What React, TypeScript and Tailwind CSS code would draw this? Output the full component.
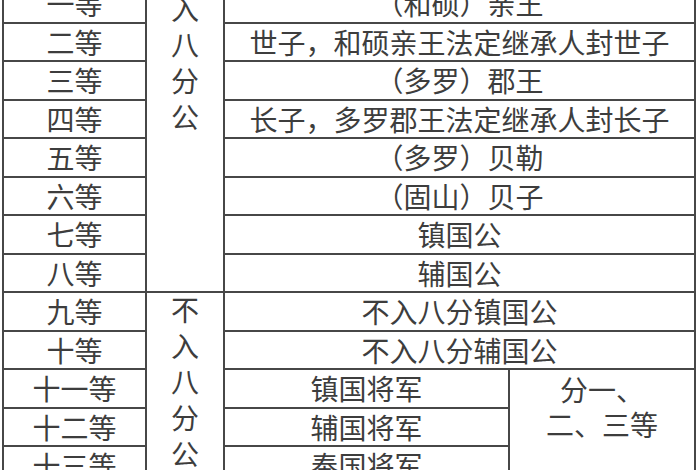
const font = { fontFamily: '"Noto Sans CJK SC", "Noto Sans CJK TC", sans-serif' }

const topRows = [
  { rank: '一等', title: '（和硕）亲王' },
  { rank: '二等', title: '世子，和硕亲王法定继承人封世子' },
  { rank: '三等', title: '（多罗）郡王' },
  { rank: '四等', title: '长子，多罗郡王法定继承人封长子' },
  { rank: '五等', title: '（多罗）贝勒' },
  { rank: '六等', title: '（固山）贝子' },
  { rank: '七等', title: '镇国公' },
  { rank: '八等', title: '辅国公' },
]

const midRows = [
  { rank: '九等', title: '不入八分镇国公' },
  { rank: '十等', title: '不入八分辅国公' },
]

const lowRows = [
  { rank: '十一等', title: '镇国将军' },
  { rank: '十二等', title: '辅国将军' },
  { rank: '十三等', title: '奉国将军' },
]

const cell = 'border-2 border-[#474747] text-center align-middle p-0 leading-none'

function Vertical({ text, className }: { text: string; className?: string }) {
  return (
    <div className={`flex flex-col items-center leading-[36px] ${className ?? ''}`}>
      {text.split('').map((ch, i) => (
        <span key={i}>{ch}</span>
      ))}
    </div>
  )
}

export default function App() {
  return (
    <div className="w-[700px] h-[470px] overflow-hidden bg-white">
      <table
        className="table-fixed border-collapse w-[692px] ml-[2px] -mt-[17px] text-[28px] text-[#3d3d3d]"
        style={font}
      >
        <colgroup>
          <col className="w-[143px]" />
          <col className="w-[78px]" />
          <col className="w-[285px]" />
          <col className="w-[186px]" />
        </colgroup>
        <tbody>
          {topRows.map((r, i) => (
            <tr key={r.rank} className="h-[38.5px]">
              <td className={cell}>{r.rank}</td>
              {i === 0 && (
                <td rowSpan={8} className={`${cell} !align-top`}>
                  <Vertical text="入八分公" className="pt-[5px]" />
                </td>
              )}
              <td colSpan={2} className={cell}>{r.title}</td>
            </tr>
          ))}
          {midRows.map((r, i) => (
            <tr key={r.rank} className="h-[38.5px]">
              <td className={cell}>{r.rank}</td>
              {i === 0 && (
                <td rowSpan={5} className={`${cell} !align-top`}>
                  <Vertical text="不入八分公" className="-mt-[2px]" />
                </td>
              )}
              <td colSpan={2} className={cell}>{r.title}</td>
            </tr>
          ))}
          {lowRows.map((r, i) => (
            <tr key={r.rank} className="h-[38.5px]">
              <td className={cell}>{r.rank}</td>
              <td className={cell}>{r.title}</td>
              {i === 0 && (
                <td rowSpan={3} className={`${cell} !align-top !leading-[35px] pt-[2px]`}>
                  分一、
                  <br />
                  二、三等
                </td>
              )}
            </tr>
          ))}
        </tbody>
      </table>
    </div>
  )
}
